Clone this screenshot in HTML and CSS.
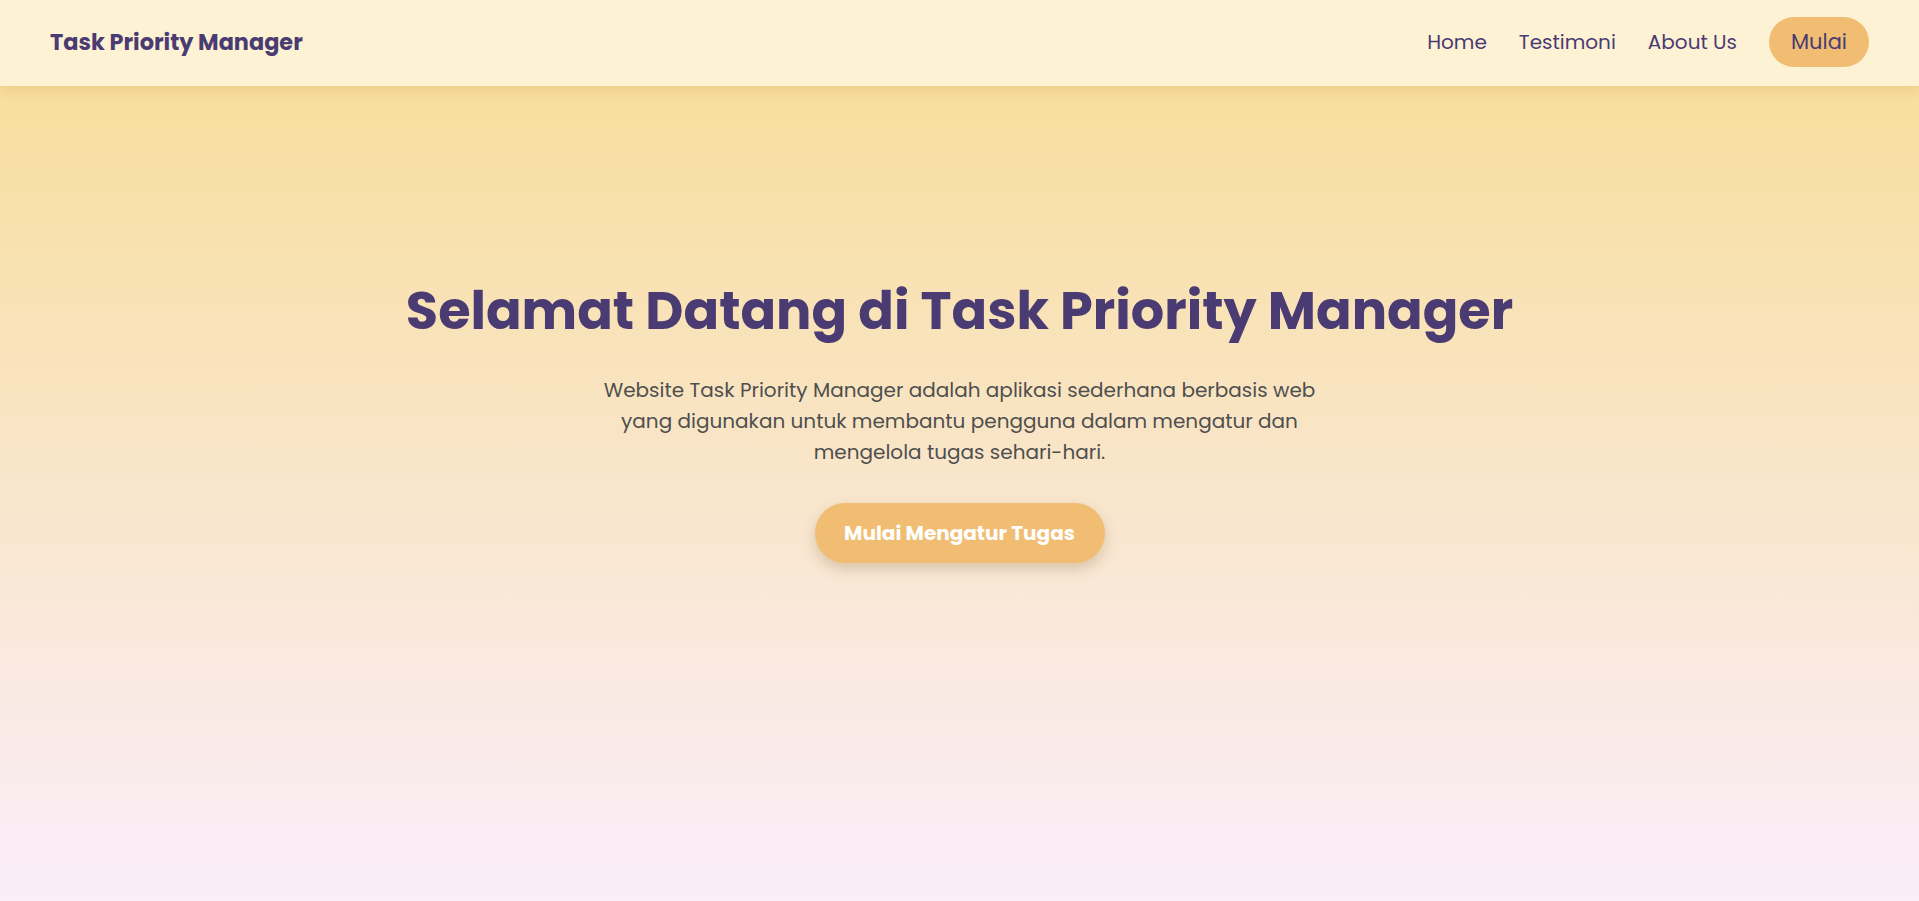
FILE: index.html
```html
<!DOCTYPE html>
<html lang="id">
<head>
<meta charset="utf-8">
<title>Task Priority Manager</title>
<link rel="stylesheet" href="styles.css">
</head>
<body>
<header class="topbar">
  <div class="brand">Task Priority Manager</div>
  <nav class="nav">
    <a class="nav-link" href="#">Home</a>
    <a class="nav-link" href="#">Testimoni</a>
    <a class="nav-link" href="#">About Us</a>
    <a class="nav-btn" href="#">Mulai</a>
  </nav>
</header>
<main class="hero">
  <h1 class="hero-title">Selamat Datang di Task Priority Manager</h1>
  <p class="hero-text">Website Task Priority Manager adalah aplikasi sederhana berbasis web yang digunakan untuk membantu pengguna dalam mengatur dan mengelola tugas sehari-hari.</p>
  <a class="hero-btn" href="#">Mulai Mengatur Tugas</a>
</main>
</body>
</html>
```
FILE: styles.css
```css
* { box-sizing: border-box; }
html, body { height: 100%; }
body {
  margin: 0;
  font-family: "Poppins", "Inter", "Open Sans", sans-serif;
  background: linear-gradient(to bottom, #f8dc93 0%, #faeefb 100%);
  min-height: 100vh;
}
.topbar {
  height: 86px;
  padding: 0 50px 3px;
  display: flex;
  align-items: center;
  justify-content: space-between;
  background: #fef2d4;
  box-shadow: 0 3px 12px rgba(160, 120, 40, 0.18);
  position: relative;
  z-index: 2;
}
.brand {
  font-size: 22.4px;
  font-weight: 700;
  color: #4a3b72;
}
.nav {
  display: flex;
  align-items: center;
  gap: 32px;
}
.nav-link {
  font-size: 20px;
  color: #4a3b72;
  text-decoration: none;
}
.nav-btn {
  display: flex;
  align-items: center;
  justify-content: center;
  width: 100px;
  height: 50px;
  border-radius: 25px;
  background: #f0bd72;
  color: #4a3b72;
  font-size: 21px;
  font-weight: 400;
  text-decoration: none;
}
.hero {
  display: flex;
  flex-direction: column;
  align-items: center;
  text-align: center;
  padding-top: 193px;
}
.hero-title {
  margin: 0;
  font-size: 52.5px;
  font-weight: 700;
  line-height: 1.2;
  color: #4a3b72;
}
.hero-text {
  margin: 33px 0 0;
  max-width: 720px;
  font-size: 20px;
  line-height: 31px;
  color: #4f4f4f;
}
.hero-btn {
  margin-top: 35px;
  width: 290px;
  height: 60px;
  border-radius: 30px;
  display: flex;
  align-items: center;
  justify-content: center;
  background: #f0bd72;
  color: #ffffff;
  font-size: 20px;
  font-weight: 700;
  text-decoration: none;
  box-shadow: 0 6px 14px rgba(120, 90, 40, 0.25);
}
```
